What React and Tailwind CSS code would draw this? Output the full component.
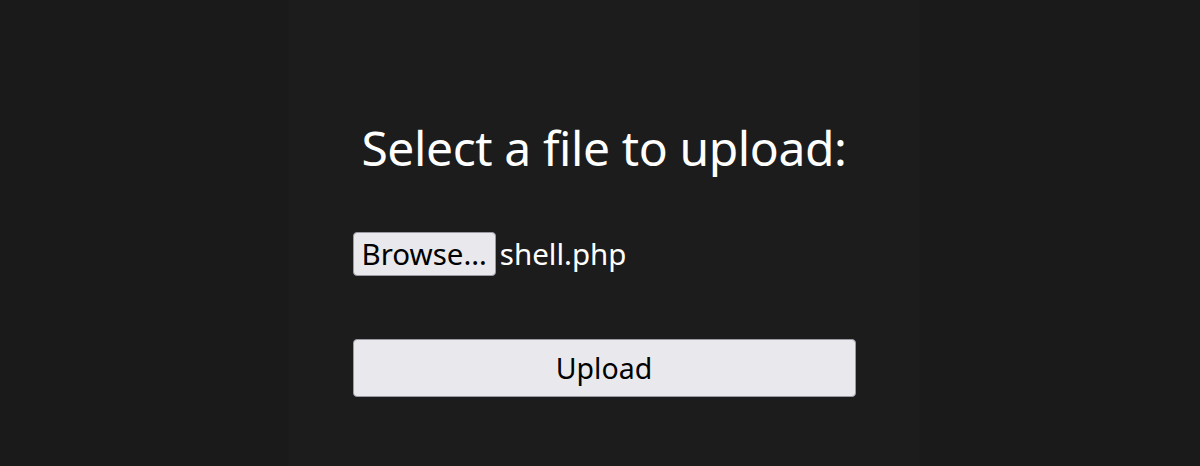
import React from 'react';

export default function App() {
  return (
    <div className="w-[1200px] h-[466px] bg-[#1a1a1a] flex justify-center pl-[8px]" style={{ fontFamily: '"Noto Sans", sans-serif' }}>
      <div className="w-[630px] h-full bg-[#1c1c1c] flex flex-col items-center pt-[117px]">
        <h1 className="text-[48px] leading-[62px] tracking-[-0.4px] text-white font-normal">Select a file to upload:</h1>
        <form className="w-[503px] flex flex-col mt-[53px]" onSubmit={(e) => e.preventDefault()}>
          <div className="flex items-center gap-[4px]">
            <button type="button" className="h-[44px] px-[8px] bg-[#e9e9ed] border border-[#9a9aa5] rounded-[4px] text-[29.5px] leading-none text-black">
              Browse…
            </button>
            <span className="text-[29.5px] text-white leading-none">shell.php</span>
          </div>
          <button type="submit" className="mt-[63px] h-[58px] w-full bg-[#e9e9ed] border border-[#9a9aa5] rounded-[4px] text-[28.5px] text-black">
            Upload
          </button>
        </form>
      </div>
    </div>
  );
}
